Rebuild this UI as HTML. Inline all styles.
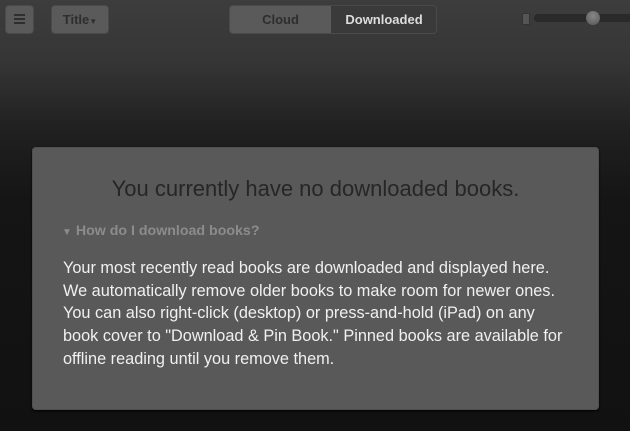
<!DOCTYPE html>
<html><head><style>
html,body{margin:0;padding:0;}
body{width:630px;height:431px;overflow:hidden;position:relative;font-family:"Liberation Sans",sans-serif;
background:linear-gradient(to bottom,#3d3d3d 0px,#363636 60px,#202020 130px,#151515 200px,#111 431px);}
.btn{position:absolute;background:#5a5a5a;border:1px solid #4a4a4a;border-radius:4px;box-sizing:border-box;}
.panel{position:absolute;left:32px;top:147px;width:567px;height:263px;background:#595959;border-radius:4px;box-shadow:0 1px 2px #000,inset 0 0 0 1px #505050;}
.h{position:absolute;left:0;width:100%;top:29px;text-align:center;font-size:22px;color:#262626;}
.q{position:absolute;left:30px;top:76px;font-size:14.2px;font-weight:bold;color:#8c8c8c;}
.p{position:absolute;left:31px;top:110px;white-space:nowrap;font-size:16.3px;line-height:22.7px;color:#f0f0f0;}
</style></head><body>
<div class="btn" style="left:5px;top:5px;width:29px;height:29px;">
<div style="position:absolute;left:8px;top:8px;width:11px;height:2px;background:#2e2e2e;box-shadow:0 4px 0 #2e2e2e,0 8px 0 #2e2e2e;"></div></div>
<div class="btn" style="left:51px;top:5px;width:58px;height:29px;font-size:13px;font-weight:bold;color:#2e2e2e;line-height:27px;text-align:center;">Title<span style="font-size:8px">▼</span></div>
<div class="btn" style="left:229px;top:5px;width:208px;height:29px;overflow:hidden;">
<div style="position:absolute;left:0;top:0;width:101px;height:27px;line-height:27px;text-align:center;font-size:13px;font-weight:bold;color:#2e2e2e;">Cloud</div>
<div style="position:absolute;left:101px;top:0;width:106px;height:27px;line-height:27px;text-align:center;font-size:13px;font-weight:bold;color:#ddd;background:#3a3a3a;">Downloaded</div></div>
<div style="position:absolute;left:522px;top:13px;width:6px;height:10px;background:#555;border:1px solid #333;border-radius:1px;"></div>
<div style="position:absolute;left:534px;top:14px;width:100px;height:8px;background:#2a2a2a;border-radius:4px;"></div>
<div style="position:absolute;left:586px;top:11px;width:14px;height:14px;border-radius:50%;background:radial-gradient(circle at 50% 35%,#888,#555);"></div>
<div class="panel">
<div class="h">You currently have no downloaded books.</div>
<div class="q"><span style="font-size:10px">▼</span> How do I download books?</div>
<div class="p">Your most recently read books are downloaded and displayed here.<br>We automatically remove older books to make room for newer ones.<br>You can also right-click (desktop) or press-and-hold (iPad) on any<br>book cover to "Download &amp; Pin Book." Pinned books are available for<br>offline reading until you remove them.</div>
</div>
</body></html>
